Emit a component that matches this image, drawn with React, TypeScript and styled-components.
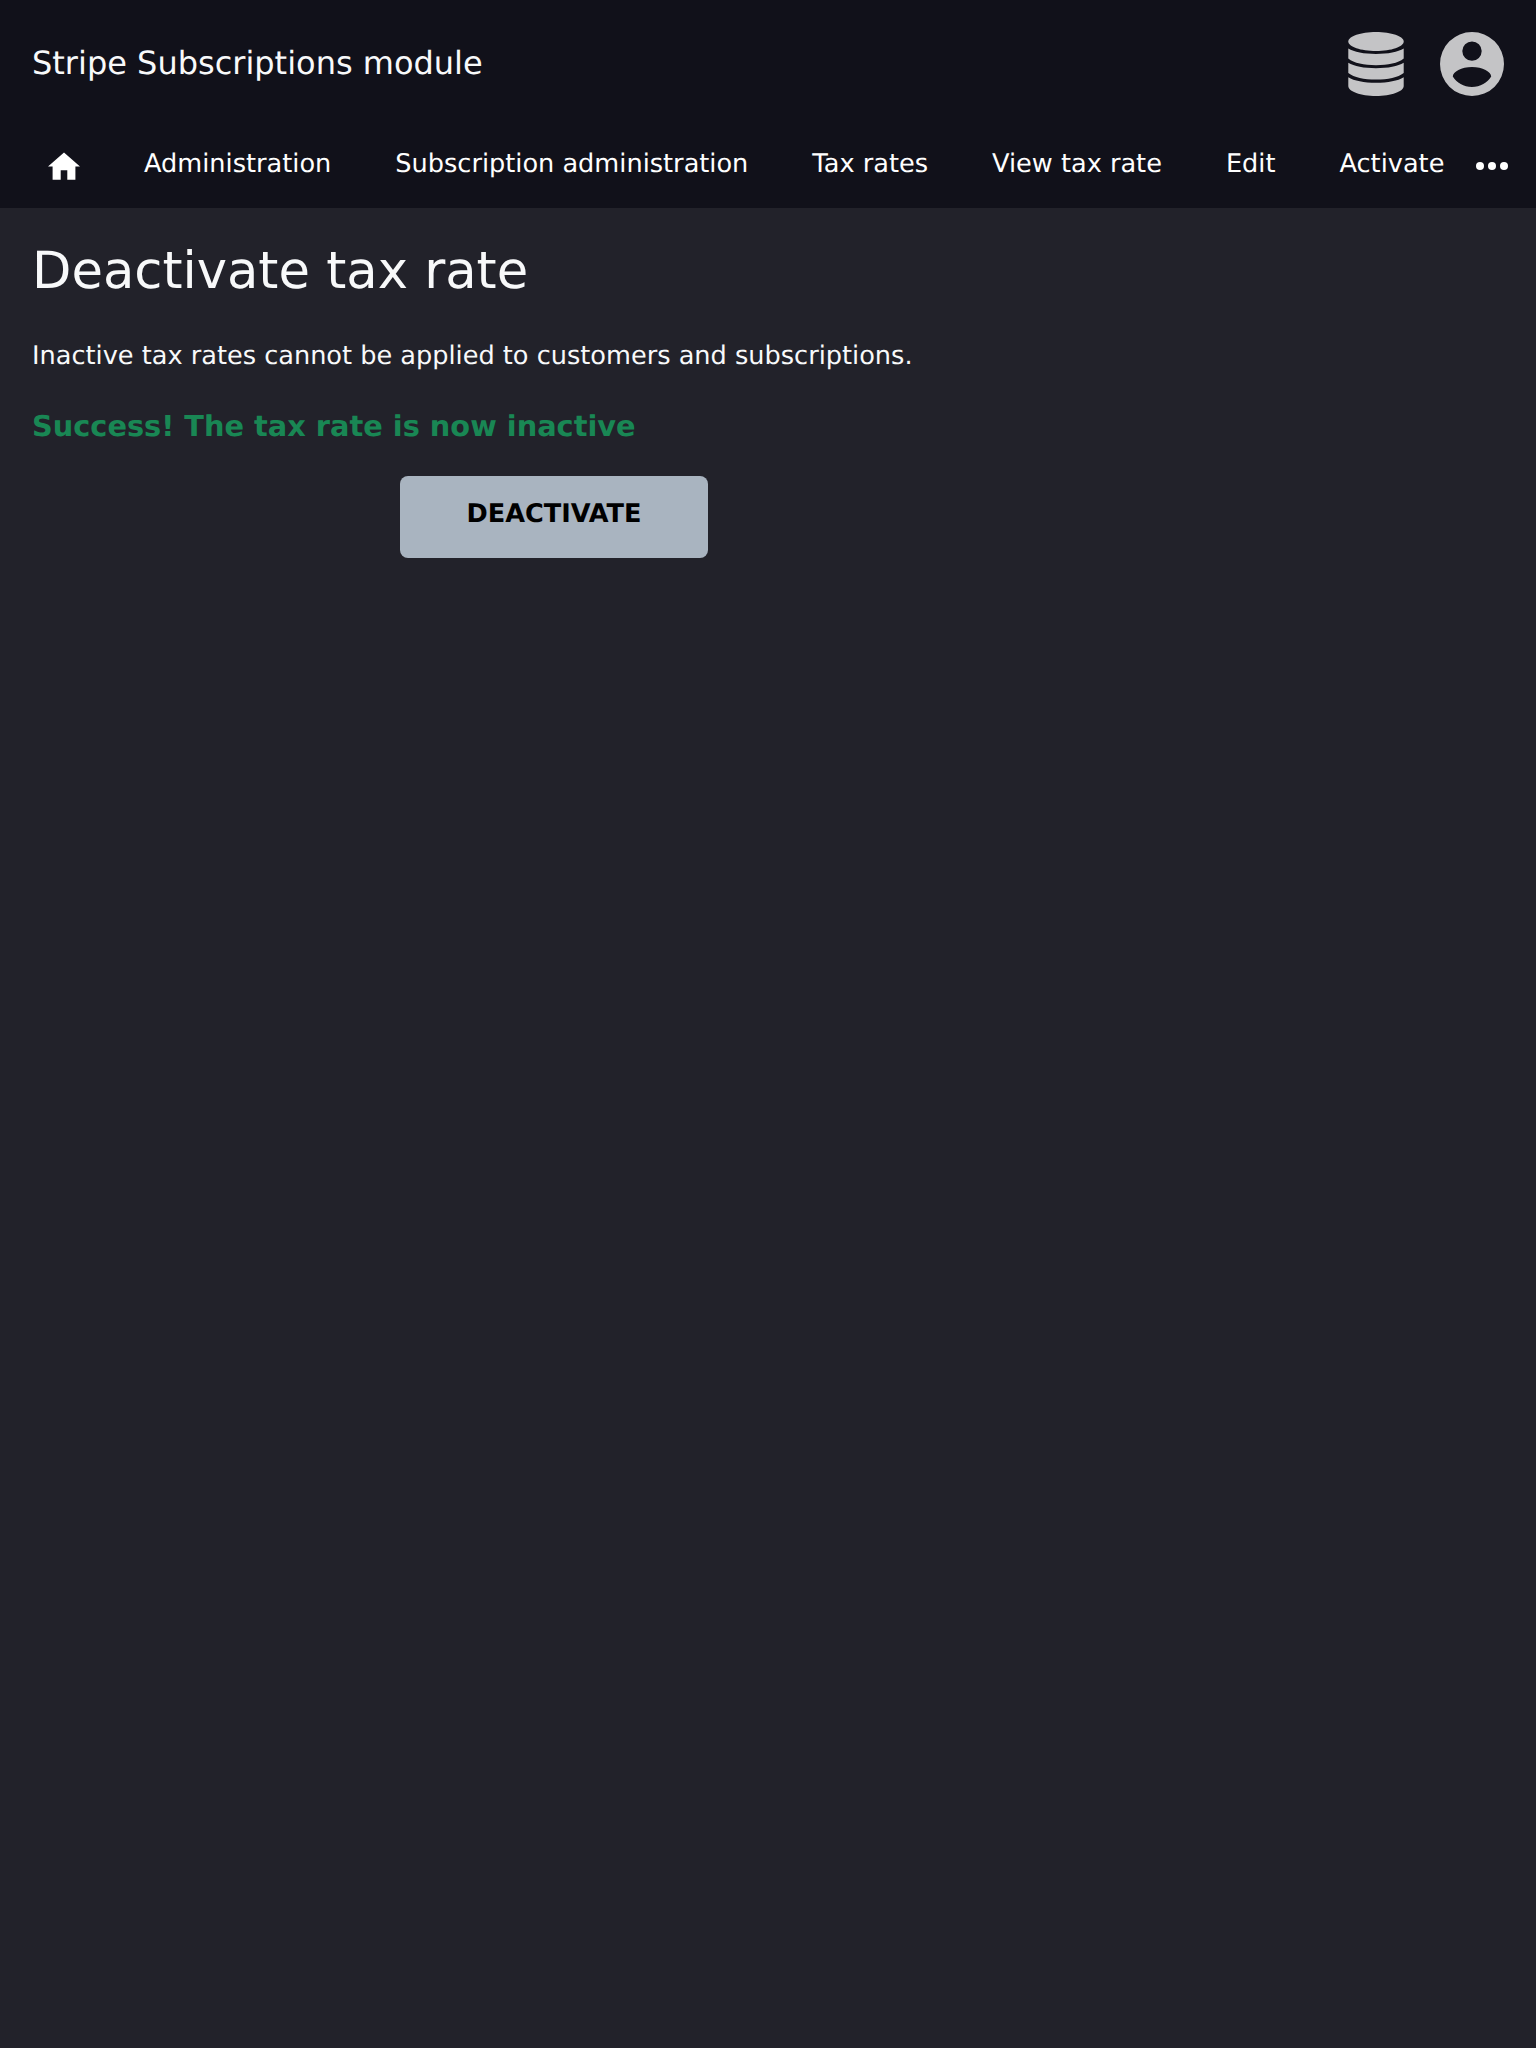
import React from 'react';
import styled, { createGlobalStyle } from 'styled-components';

const GlobalStyle = createGlobalStyle`
  * { box-sizing: border-box; }
  body {
    margin: 0; background: #22222a; color: #fff; font-family: "DejaVu Sans", sans-serif;
    text-rendering: geometricPrecision;
  }
  svg { display: block; fill: currentColor; }
`;
const Page = styled.div`min-height: 2048px;`;
const Header = styled.header`background: #11111a; height: 208px;`;
const TopBar = styled.div`
  display: flex; justify-content: space-between; height: 128px; padding: 32px;
`;
const Brand = styled.div`font-size: 32px; line-height: 37px; padding-top: 13px; color: #f8f9fa;`;
const Tools = styled.div`
  display: flex; gap: 32px; color: #c4c4c6;
`;
const Nav = styled.nav`
  display: flex; height: 80px; padding-left: 32px; font-size: 25.6px; white-space: nowrap;
`;
const NavItem = styled.a`padding: 21px 32px 0; line-height: 30px;`;
const HomeItem = styled.a`width: 80px; padding: 24px 16px 0;`;
const MoreItem = styled.a`padding-top: 34px;`;
const Main = styled.main`padding: 33px 32px 32px;`;
const Title = styled.h1`margin: 0; font-size: 51.2px; line-height: 60px; font-weight: 400; color: #f8f9fa;`;
const Intro = styled.p`margin: 40px 0 0; font-size: 25.6px; line-height: 30px; color: #f8f9fa;`;
const Message = styled.p`margin: 38px 0 0; font-size: 28.8px; line-height: 34px; font-weight: 700; color: #198754;`;
const Form = styled.form`width: 1044px; margin-top: 33px; display: flex; justify-content: center;`;
const Button = styled.button`
  width: 308px; height: 82px; border: 0; border-radius: 8px; background: #a9b4c0; color: #000;
  font: 700 25.6px/30px "DejaVu Sans", sans-serif; padding: 0 0 6px;
  text-rendering: geometricPrecision;
`;

const DatabaseIcon = () => (
  <svg width="64" height="64" viewBox="0 0 64 64">
    <path d="M32 0C47.3 0 59.7 4.3 59.7 9.5C59.7 14.8 47.3 19 32 19S4.3 14.8 4.3 9.5C4.3 4.3 16.7 0 32 0Z" />
    <path d="M4.3 16.6C10 20.2 20 22 32 22S54 20.2 59.7 16.6V26.500C54 31.2 44 33.2 32 33.2S10 31.2 4.3 26.500Z" />
    <path d="M4.3 30.8C10 34.4 20 36.2 32 36.2S54 34.4 59.7 30.8V41C54 45.6 44 47.6 32 47.6S10 45.6 4.3 41Z" />
    <path d="M4.3 45.2C10 48.8 20 50.7 32 50.7S54 48.8 59.7 45.2V54C59.7 59.5 47.3 64 32 64S4.3 59.5 4.3 54Z" />
  </svg>
);

const AccountIcon = () => (
  <svg width="64" height="64" viewBox="0 0 64 64">
    <path
      fillRule="evenodd"
      d="M32 0a32 32 0 1 1 0 64a32 32 0 1 1 0-64ZM32 9.4a9.7 9.7 0 1 0 0 19.4a9.7 9.7 0 1 0 0-19.4ZM32 35C21.5 35 12.8 40 12.8 44.5C16.5 50.8 23.8 55 32 55S47.5 50.8 51.2 44.5C51.2 40 42.5 35 32 35Z"
    />
  </svg>
);

const HomeIcon = () => (
  <svg width="32" height="32" viewBox="0 0 32 32">
    <path d="M16 0.4L0 14.4H4.600V27.7H12.700V18.2H19.3V27.7H27.400V14.4H32Z" />
  </svg>
);

const MoreIcon = () => (
  <svg width="32" height="8" viewBox="0 0 32 8">
    <circle cx="4" cy="4" r="4" /><circle cx="16" cy="4" r="4" /><circle cx="28" cy="4" r="4" />
  </svg>
);

const links = ['Administration', 'Subscription administration', 'Tax rates', 'View tax rate', 'Edit', 'Activate'];

export default function App() {
  return (
    <Page>
      <GlobalStyle />
      <Header>
        <TopBar>
          <Brand>Stripe Subscriptions module</Brand>
          <Tools><DatabaseIcon /><AccountIcon /></Tools>
        </TopBar>
        <Nav>
          <HomeItem><HomeIcon /></HomeItem>
          {links.map((l) => <NavItem key={l}>{l}</NavItem>)}
          <MoreItem><MoreIcon /></MoreItem>
        </Nav>
      </Header>
      <Main>
        <Title>Deactivate tax rate</Title>
        <Intro>Inactive tax rates cannot be applied to customers and subscriptions.</Intro>
        <Message>Success! The tax rate is now inactive</Message>
        <Form><Button type="button">DEACTIVATE</Button></Form>
      </Main>
    </Page>
  );
}
